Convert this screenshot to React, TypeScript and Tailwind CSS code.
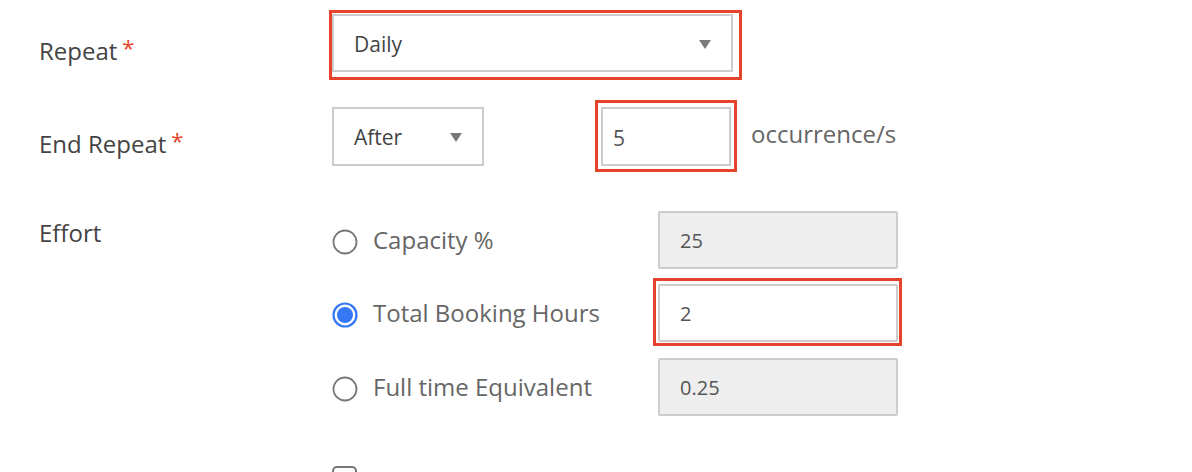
import React from 'react';

const font = { fontFamily: '"Open Sans", Lato, sans-serif' };

function Caret() {
  return (
    <svg width="12" height="9" viewBox="0 0 12 9" className="shrink-0">
      <path d="M0 0 L12 0 L6 9 Z" fill="#7a7a7a" />
    </svg>
  );
}

function Label({ text, required, pt }: { text: string; required?: boolean; pt: string }) {
  return (
    <div className={`w-[293px] shrink-0 text-[24px] leading-8 text-[#444] ${pt}`}>
      {text}
      {required && <span className="ml-[5px] align-top text-[22px] leading-6 text-[#e5432a]">*</span>}
    </div>
  );
}

function Radio({ checked }: { checked?: boolean }) {
  return (
    <svg width="26" height="26" viewBox="0 0 26 26" className="shrink-0">
      {checked ? (
        <>
          <circle cx="13" cy="13" r="11.5" fill="white" stroke="#3478f6" strokeWidth="2.2" />
          <circle cx="13" cy="13" r="8" fill="#3478f6" />
        </>
      ) : (
        <circle cx="13" cy="13" r="11.5" fill="white" stroke="#777" strokeWidth="1.8" />
      )}
    </svg>
  );
}

function Highlight({ className }: { className: string }) {
  return <div className={`pointer-events-none absolute border-[3px] border-[#e5432a] ${className}`} />;
}

const options = [
  { label: 'Capacity %', value: '25', disabled: true, mt: '' },
  { label: 'Total Booking Hours', value: '2', disabled: false, mt: 'mt-[15px]' },
  { label: 'Full time Equivalent', value: '0.25', disabled: true, mt: 'mt-[16px]' },
];

export default function App() {
  return (
    <div className="h-[472px] w-[1192px] overflow-hidden bg-white pl-[39px] pt-[14px]" style={font}>
      {/* Repeat */}
      <div className="flex items-start">
        <Label text="Repeat" required pt="pt-[21px]" />
        <div className="relative">
          <div className="flex h-[58px] w-[401px] items-center justify-between border-2 border-[#cccccc] pl-[20px] pr-[20px] pt-[3px] text-[21px] text-[#444]">
            <span>Daily</span>
            <Caret />
          </div>
          <Highlight className="-left-[3px] -top-[4px] -right-[9px] -bottom-[8px]" />
        </div>
      </div>

      {/* End Repeat */}
      <div className="mt-[35px] flex items-start">
        <Label text="End Repeat" required pt="pt-[21px]" />
        <div className="flex h-[59px] items-center">
          <div className="flex h-[59px] w-[152px] items-center justify-between border-2 border-[#cccccc] pl-[20px] pr-[20px] pt-[2px] text-[21px] text-[#444]">
            <span>After</span>
            <Caret />
          </div>
          <div className="relative ml-[117px]">
            <div className="flex h-[59px] w-[130px] items-center border-2 border-[#cccccc] pl-[10px] pt-[4px] text-[21px] text-[#555]">
              5
            </div>
            <Highlight className="-left-[6px] -top-[7px] -right-[6px] -bottom-[6px]" />
          </div>
          <span className="ml-[20px] pb-[5px] text-[24px] text-[#666]">occurrence/s</span>
        </div>
      </div>

      {/* Effort */}
      <div className="mt-[45px] flex items-start">
        <Label text="Effort" pt="pt-[6px]" />
        <div className="flex flex-col">
          {options.map((o, i) => (
            <div key={o.label} className={`flex items-center ${o.mt}`}>
              <div className="flex w-[326px] items-center gap-[15px] pt-[3px] text-[24px] text-[#666]">
                <Radio checked={i === 1} />
                <span className="-mt-[4px]">{o.label}</span>
              </div>
              <div className="relative">
                <div
                  className={`flex h-[58px] w-[240px] items-center rounded-[2px] border-2 border-[#cccccc] pl-[20px] pt-[2px] text-[20px] text-[#555] ${
                    o.disabled ? 'bg-[#eeeeee]' : 'bg-white'
                  }`}
                >
                  {o.value}
                </div>
                {!o.disabled && <Highlight className="-left-[5px] -top-[6px] -right-[4px] -bottom-[4px]" />}
              </div>
            </div>
          ))}
          <div className="mt-[50px] h-[25px] w-[25px] rounded-[5px] border-2 border-[#777]" />
        </div>
      </div>
    </div>
  );
}
